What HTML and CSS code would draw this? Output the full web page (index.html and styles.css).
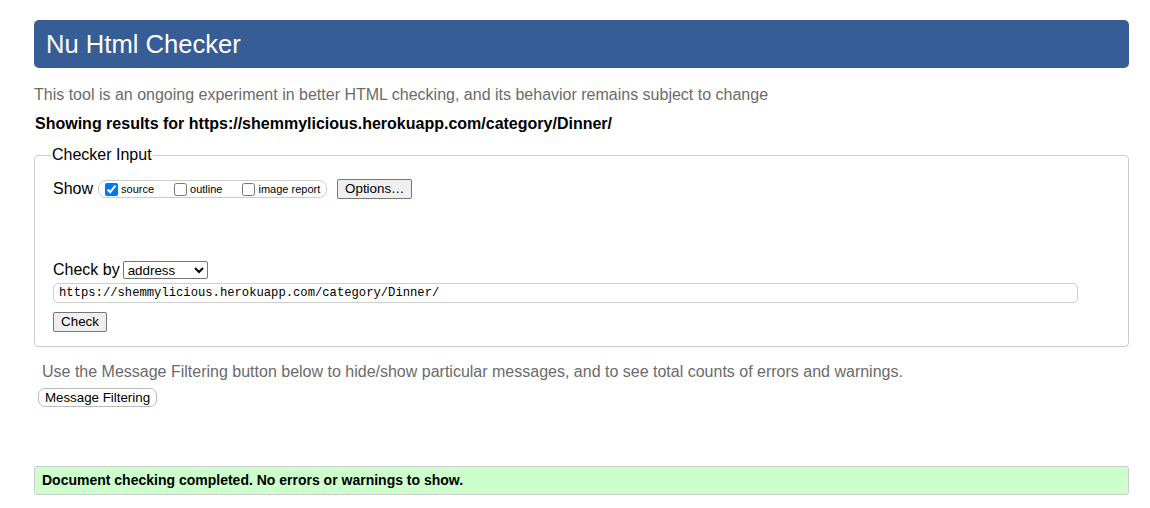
FILE: index.html
```html
<!DOCTYPE html>
<html lang="en">
<head>
<meta charset="utf-8">
<title>Nu Html Checker</title>
<link rel="stylesheet" href="styles.css">
</head>
<body>
<div class="page">
  <h1 class="title">Nu Html Checker</h1>
  <p class="tagline">This tool is an ongoing experiment in better HTML checking, and its behavior remains subject to change</p>
  <p class="results">Showing results for https://shemmylicious.herokuapp.com/category/Dinner/</p>
  <fieldset class="checker">
    <legend class="legend">Checker Input</legend>
    <div class="show-row">
      <span class="label">Show</span>
      <span class="opts">
        <label class="opt"><input type="checkbox" checked>source</label>
        <label class="opt"><input type="checkbox">outline</label>
        <label class="opt"><input type="checkbox">image report</label>
      </span>
      <button class="btn options">Options…</button>
    </div>
    <div class="by-row">
      <span class="label">Check by</span>
      <select class="by-select"><option>address</option></select>
    </div>
    <div class="url-row">
      <input class="url" type="text" value="https://shemmylicious.herokuapp.com/category/Dinner/">
    </div>
    <div class="check-row">
      <button class="btn check">Check</button>
    </div>
  </fieldset>
  <p class="filter-note">Use the Message Filtering button below to hide/show particular messages, and to see total counts of errors and warnings.</p>
  <button class="btn filter">Message Filtering</button>
  <p class="success">Document checking completed. No errors or warnings to show.</p>
</div>
</body>
</html>
```
FILE: styles.css
```css
html, body {
  margin: 0;
  padding: 0;
  background: #fff;
}
body {
  font-family: "Liberation Sans", Arial, sans-serif;
  color: #000;
}
.page {
  padding: 20px 21px 0 34px;
}
.title {
  margin: 0;
  height: 48px;
  box-sizing: border-box;
  background: #365d95;
  color: #fff;
  border-radius: 5px;
  font-size: 25.6px;
  font-weight: normal;
  line-height: 48px;
  padding: 0 0 0 12px;
}
.tagline {
  margin: 18px 0 0;
  font-size: 16px;
  line-height: 18px;
  color: #6b6b6b;
}
.results {
  margin: 11px 0 0 1px;
  font-size: 16px;
  line-height: 18px;
  font-weight: bold;
}
.checker {
  margin: 13px 0 0;
  border: 1px solid #ccc;
  border-radius: 4px;
  padding: 15px 18px 14px 18px;
  min-width: 0;
}
.legend {
  font-size: 16px;
  line-height: 18px;
  padding: 0 1px;
  margin-left: -2px;
  color: #000;
}
.show-row {
  display: flex;
  align-items: center;
  height: 20px;
}
.label {
  font-size: 16px;
  line-height: 18px;
}
.opts {
  display: inline-flex;
  align-items: center;
  margin-left: 5px;
  height: 18px;
  box-sizing: border-box;
  border: 1px solid #ccc;
  border-radius: 8px;
  padding: 0 6px 0 6px;
  font-size: 11px;
}
.opt {
  display: inline-flex;
  align-items: center;
  margin-right: 20px;
}
.opt:last-child {
  margin-right: 0;
}
.opt input {
  width: 13px;
  height: 13px;
  margin: 0 3px 0 0;
}
.btn {
  font-family: "Liberation Sans", Arial, sans-serif;
  font-size: 13.33px;
  background: #efefef;
  border: 1px solid #767676;
  border-radius: 2px;
  color: #000;
  height: 20px;
  box-sizing: border-box;
  padding: 0 6px;
  line-height: 18px;
}
.options {
  margin-left: 10px;
  width: 75px;
}
.by-row {
  display: flex;
  align-items: center;
  margin-top: 62px;
  height: 18px;
}
.by-select {
  margin-left: 3px;
  width: 85px;
  height: 18px;
  font-family: "Liberation Sans", Arial, sans-serif;
  font-size: 13.33px;
  border: 1px solid #767676;
  border-radius: 2px;
  background: #fff;
  padding: 0;
}
.url-row {
  margin-top: 4px;
}
.url {
  display: block;
  width: 1025px;
  height: 20px;
  box-sizing: border-box;
  border: 1px solid #ccc;
  border-radius: 5px;
  padding: 0 5px;
  font-family: "Liberation Mono", "DejaVu Sans Mono", monospace;
  font-size: 12.2px;
  color: #000;
}
.check-row {
  margin-top: 9px;
  display: flex;
}
.check {
  width: 54px;
}
.filter-note {
  margin: 16px 0 0 8px;
  font-size: 16px;
  line-height: 18px;
  color: #6b6b6b;
}
.filter {
  margin: 7px 0 0 4px;
  background: #fff;
  border: 1px solid #bbb;
  border-radius: 7px;
  height: 19px;
  width: 119px;
  padding: 0;
}
.success {
  margin: 59px 0 0;
  height: 29px;
  box-sizing: border-box;
  background: #ccffcc;
  border: 1px solid #ccc;
  border-radius: 3px;
  padding: 0 0 0 7px;
  font-size: 14px;
  font-weight: bold;
  line-height: 27px;
}
```
